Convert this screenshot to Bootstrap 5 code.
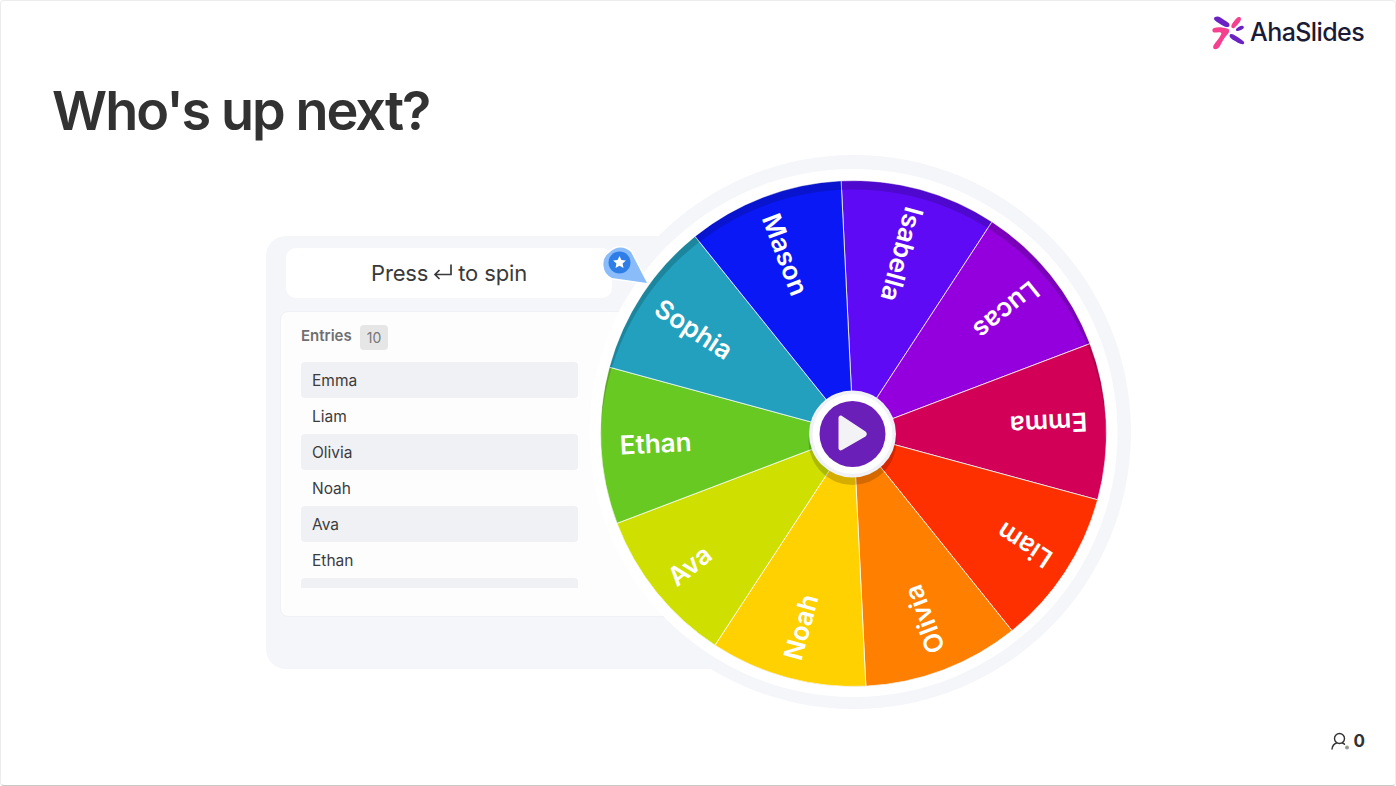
<!DOCTYPE html>
<html lang="en">
<head>
    <meta charset="UTF-8">
    <meta name="viewport" content="width=device-width, initial-scale=1.0">
    <title>Who's up next?</title>
    <link rel="stylesheet" href="https://cdn.jsdelivr.net/npm/bootstrap@5.3.1/dist/css/bootstrap.min.css">
    <script src="https://cdn.jsdelivr.net/npm/bootstrap@5.3.1/dist/js/bootstrap.bundle.min.js"></script>
    <style>
        body {
            background: #fff;
            font-family: Inter, "Liberation Sans", sans-serif;
            color: #333;
            overflow: hidden;
        }
        .stage {
            position: relative;
            width: 1396px;
            height: 786px;
            background: #fff;
            border: 1px solid #ececec;
            border-bottom-color: #c9c9c9;
            border-radius: 4px;
            overflow: hidden;
        }
        .top-bar { height: 48px; padding: 14px 31px 0 0; }
        .logo-word { font-size: 25px; font-weight: 500; letter-spacing: -0.6px; color: #1b1b36; line-height: 34px; }
        .slide-title {
            margin: 26px 0 0 51px;
            font-size: 54px;
            line-height: 72px;
            font-weight: 600;
            letter-spacing: -1.95px;
            color: #323232;
        }
        .wheel-halo {
            position: absolute;
            left: 575.500px;
            top: 154px;
            width: 554px;
            height: 554px;
            border-radius: 50%;
            background: #f5f6fa;
        }
        .spin-panel {
            position: relative;
            width: 447px;
            height: 433px;
            margin: 89px 0 0 265px;
            padding: 12px 0 0 14px;
            background: #f5f6fa;
            border-radius: 20px 0 0 20px;
        }
        .spin-btn {
            width: 326px;
            height: 50px;
            margin-left: 6px;
            background: #fff;
            border-radius: 10px;
            font-size: 22px;
            letter-spacing: -0.15px;
            color: #3a3a3a;
        }
        .entries-box {
            width: 420px;
            height: 306px;
            margin-top: 13px;
            padding: 13px 20px 0;
            background: #fdfdfe;
            border: 1px solid #f0f1f6;
            border-radius: 8px;
        }
        .entries-head { width: 277px; height: 25px; font-size: 15px; font-weight: 600; color: #707070; }
        .entries-label { margin: 0 0 3px 0; }
        .entries-count {
            padding: 2px 7px;
            border-radius: 4px;
            background: #e6e6e6;
            font-size: 14px;
            font-weight: 400;
            color: #777;
        }
        .entries-list { width: 277px; height: 226px; margin-top: 12px; overflow: hidden; }
        .entry-row { height: 36px; line-height: 38px; padding-left: 11px; border-radius: 4px; font-size: 15.5px; color: #3c3c3c; }
        .entry-row:nth-child(odd) { background: #f0f1f5; }
        .wheel-layer { position: absolute; left: -1px; top: -1px; }
        .wheel-label { font-family: Inter, "Liberation Sans", sans-serif; font-size: 26px; font-weight: 600; fill: #fff; dominant-baseline: central; }
        .count-foot { position: absolute; right: 30px; bottom: 31px; font-size: 17px; font-weight: 700; color: #333; }
    </style>
</head>
<body>

<div class="stage">
    <div class="top-bar d-flex justify-content-end align-items-start gap-1">
        <svg width="34" height="36" viewBox="1213 13 34 36" aria-hidden="true">
            <path d="M1216 15c3-1.500 6 .5 8.500 2.500 2.500 2 6.500 3 6 6-.5 2.200-4 1.700-6.500.2-3.500-2-6.500-3.700-8.500-5.700-.8-.8-.5-2.500.5-3z" fill="#6a22c4"/>
            <path d="M1215 26c4-1.500 9-.5 13 .5 2.800.7 2.800 3.300 1.200 5-3 3-5.500 7-8 12-1 2-2.700 4-5.200 3.800-2-.3-2.400-2.500-1.200-4.200 2.500-3.500 5.500-7 7.500-11 .5-1.500-1-2-3-1.800-2 .2-4 .7-5.300-.3-1-.9-1-3.300 1-4z" fill="#f5408f"/>
            <path d="M1240.500 15c2 .5 1.700 2.800.7 4.300-1.500 2.200-3.700 4.700-5.700 6.400-1.200 1-3.200.5-3.200-1.200 0-2.500 2-4.200 3.500-6.200 1.200-1.500 2.700-3.800 4.700-3.300z" fill="#f5408f"/>
            <path d="M1244 24c1.700 1 .7 2.800-1 3.400-1.500.5-3 1.300-4.500 1.600-1.400.2-2.200-1.100-1.200-2.200 1.500-1.300 4.700-3.800 6.700-2.800z" fill="#6a22c4"/>
            <path d="M1231 32.500c1.500-1.200 4 .3 5.500 1.300 2.500 1.800 6.200 3.700 8.200 5.700 1 1.200.5 3-1.200 2.700-3-.5-6.300-2.500-9.300-4.300-2-1.200-4.700-3.300-3.200-5.400z" fill="#6a22c4"/>
        </svg>
        <span class="logo-word">AhaSlides</span>
    </div>

    <h1 class="slide-title">Who's up next?</h1>

    <div class="wheel-halo"></div>

    <div class="spin-panel">
        <div class="spin-btn d-flex align-items-center justify-content-center gap-1">
            <span>Press</span>
            <svg width="22" height="20" viewBox="0 0 22 20" aria-hidden="true">
                <path d="M19 1.500v10H3M7.500 7 3 11.500 7.500 16" fill="none" stroke="#3a3a3a" stroke-width="1.700"/>
            </svg>
            <span>to spin</span>
        </div>
        <div class="entries-box">
            <div class="entries-head d-flex align-items-center gap-2">
                <span class="entries-label">Entries</span>
                <span class="entries-count">10</span>
            </div>
            <div class="entries-list">
                <div class="entry-row">Emma</div>
                <div class="entry-row">Liam</div>
                <div class="entry-row">Olivia</div>
                <div class="entry-row">Noah</div>
                <div class="entry-row">Ava</div>
                <div class="entry-row">Ethan</div>
                <div class="entry-row"></div>
            </div>
        </div>
    </div>

    <svg class="wheel-layer" id="wheel" width="1396" height="786" viewBox="0 0 1396 786">
        <defs>
            <clipPath id="wheelClip"><circle cx="853.500" cy="433.500" r="253"/></clipPath>
        </defs>
        <circle cx="853.500" cy="433" r="264" fill="#fff"/>
        <g id="slices" clip-path="url(#wheelClip)"></g>
        <path d="M600.500 433.500a253 253 0 1 0 506 0a253 253 0 1 0-506 0zM600.500 442.500a253 253 0 1 0 506 0a253 253 0 1 0-506 0z" fill="#000" fill-opacity=".16" fill-rule="evenodd" clip-path="url(#wheelClip)"/>
        <g id="labels"></g>
        <circle cx="852.500" cy="441" r="44" fill="#000" fill-opacity=".17" clip-path="url(#wheelClip)"/>
        <circle cx="852.500" cy="434" r="43.500" fill="#f1f2f7"/>
        <circle cx="852.500" cy="434" r="40" fill="#fff"/>
        <circle cx="852.500" cy="434" r="33" fill="#6a1fb8"/>
        <path d="M838.500 418c0-2 1.800-3 3.500-2l23.500 15.500c1.800 1.300 1.800 3.700 0 5L842 450c-1.700 1-3.500 0-3.500-2z" fill="#f3f3f5"/>

        <path d="M610 252a14.500 14.500 0 0 1 21 0l16 31-35-5a15 15 0 0 1-2-26z" fill="#8bbcfa" stroke="#fff" stroke-width="3" stroke-linejoin="round" paint-order="stroke"/>
        <circle cx="619.500" cy="262.500" r="11" fill="#2f7ee8"/>
        <path d="M619.500 256l1.900 4.100 4.500.5-3.300 3 .9 4.400-4-2.200-4 2.200.9-4.400-3.300-3 4.500-.5z" fill="#fff"/>
    </svg>

    <div class="count-foot d-flex align-items-center gap-1">
        <svg width="19" height="19" viewBox="0 0 19 19" aria-hidden="true">
            <circle cx="8.500" cy="6.500" r="5" fill="none" stroke="#333" stroke-width="1.400"/>
            <path d="M1 17c.5-3.500 3-5.500 4.500-6M11.500 11c.8.3 1.500.7 2 1.200" fill="none" stroke="#333" stroke-width="1.400" stroke-linecap="round"/>
            <circle cx="16" cy="15.500" r="2" fill="#999"/>
        </svg>
        <span>0</span>
    </div>
</div>

<script>
    // clockwise from Isabella, first edge sits a bit left of straight up
    const entries = [
        ['Isabella', '#5f0af5'], ['Lucas', '#9300dd'], ['Emma', '#d20057'], ['Liam', '#ff3000'],
        ['Olivia', '#ff7f00'], ['Noah', '#ffd100'], ['Ava', '#cfe000'], ['Ethan', '#68c922'],
        ['Sophia', '#22a0bd'], ['Mason', '#0a18f5']
    ];
    const cx = 853.5, cy = 433.5, r = 253, startAngle = -2.8;
    const ns = 'http://www.w3.org/2000/svg';
    const point = deg => {
        const a = deg * Math.PI / 180;
        return (cx + r * Math.sin(a)).toFixed(2) + ' ' + (cy - r * Math.cos(a)).toFixed(2);
    };
    entries.forEach((item, i) => {
        const a1 = startAngle + 36 * i, a2 = a1 + 36;
        const slice = document.createElementNS(ns, 'path');
        slice.setAttribute('d', `M${cx} ${cy}L${point(a1)}A${r} ${r} 0 0 1 ${point(a2)}Z`);
        slice.setAttribute('fill', item[1]);
        slice.setAttribute('stroke', 'rgba(255,255,255,.75)');
        slice.setAttribute('stroke-width', '1');
        document.getElementById('slices').appendChild(slice);

        const label = document.createElementNS(ns, 'text');
        label.setAttribute('class', 'wheel-label');
        label.setAttribute('x', -234);
        label.setAttribute('y', 0);
        label.setAttribute('transform', `translate(${cx} ${cy}) rotate(${a1 + 18 + 90})`);
        label.textContent = item[0];
        document.getElementById('labels').appendChild(label);
    });
</script>

</body>
</html>
